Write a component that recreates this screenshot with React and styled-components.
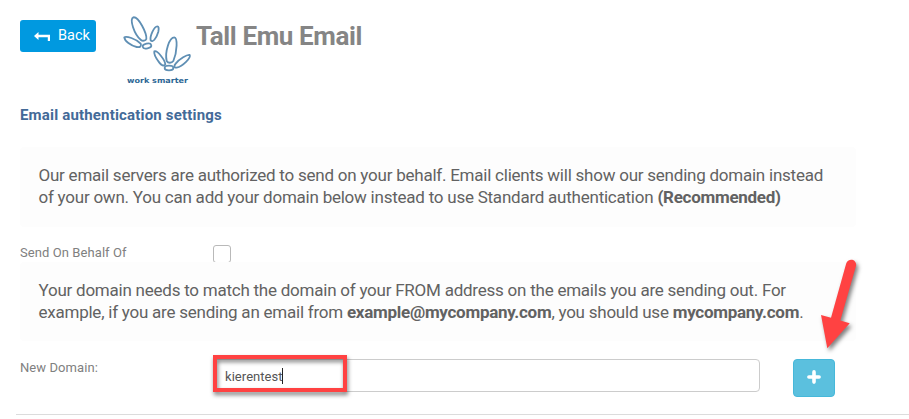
import React from 'react'
import styled, { createGlobalStyle } from 'styled-components'

const GlobalStyle = createGlobalStyle`
  * {
    box-sizing: border-box;
  }
  body {
    margin: 0;
    background: #fff;
    font-family: Roboto, 'Liberation Sans', sans-serif;
    overflow: hidden;
  }
`

const Page = styled.main`
  position: relative;
  height: 419px;
  padding-left: 20px;
  overflow: hidden;
`

const Header = styled.header`
  display: flex;
  align-items: flex-start;
  height: 98px;
`

const BackButton = styled.button`
  display: flex;
  align-items: center;
  gap: 8px;
  width: 76px;
  height: 32px;
  margin-top: 20px;
  padding: 0 0 1px 14px;
  border: 0;
  border-radius: 3px;
  background: #0099e0;
  color: #fff;
  font: 400 14.5px Roboto, sans-serif;
`

const Logo = styled.svg`
  width: 90px;
  height: 90px;
  margin: 5px -4px 0 14px;
  flex: none;
  fill: none;
  stroke: #5f8fb4;
  stroke-width: 5.5;
`

const LogoText = styled.text`
  fill: #2d6795;
  stroke: none;
  font: 700 22px 'DejaVu Sans', sans-serif;
`

const Title = styled.h1`
  margin: 20px 0 0;
  color: #858585;
  font-size: 26px;
  font-weight: 700;
  letter-spacing: -0.38px;
  line-height: 32px;
`

const SectionTitle = styled.h2`
  height: 49px;
  margin: 0;
  padding-top: 8px;
  color: #436a98;
  font-size: 15px;
  font-weight: 700;
  letter-spacing: 0.18px;
  line-height: 18px;
`

const Panel = styled.p`
  width: 836px;
  height: ${({ height }) => height}px;
  margin: 0;
  padding: 17px 18.5px;
  border-radius: 4px;
  background: #fdfdfd;
  color: #626262;
  font-size: 17px;
  letter-spacing: -0.235px;
  line-height: 22px;
  white-space: nowrap;

  b {
    letter-spacing: -0.27px;
  }
`

const Row = styled.div`
  display: flex;
  align-items: flex-start;
  height: ${({ height }) => height}px;
  padding-top: ${({ top }) => top}px;
  overflow: ${({ clipped }) => (clipped ? 'hidden' : 'visible')};
`

const Label = styled.label`
  flex: none;
  width: 193px;
  color: #808080;
  font-size: 13px;
  letter-spacing: 0.08px;
  line-height: ${({ lineHeight = 16 }) => lineHeight}px;
`

const Checkbox = styled.span`
  width: 18px;
  height: 18px;
  border: 1px solid #b9b9b9;
  border-radius: 3px;
  background: #fff;
`

const Field = styled.div`
  position: relative;
  display: flex;
  align-items: center;
  width: 547px;
  height: 33px;
  padding: 2px 0 0 11px;
  border: 1px solid #ccc;
  border-radius: 4px;
  color: #555;
  font-size: 13px;
  letter-spacing: 0.05px;
`

const Caret = styled.span`
  width: 1px;
  height: 16px;
  margin: -1px 0 0 -0.5px;
  background: #222;
`

const Highlight = styled.span`
  position: absolute;
  top: -5px;
  left: -1px;
  width: 134px;
  height: 37px;
  border: 4px solid #ff4242;
  filter: drop-shadow(1px 3px 2px rgba(0, 0, 0, 0.5));
`

const AddButton = styled.button`
  display: flex;
  align-items: center;
  justify-content: center;
  width: 42px;
  height: 38px;
  margin-left: 33px;
  padding: 0 1px 2px 0;
  border: 1px solid #46b8da;
  border-radius: 4px;
  background: #5bc0de;
`

const Divider = styled.hr`
  height: 1px;
  margin: 0 0 0 -4px;
  border: 0;
  background: #dcdcdc;
`

const Pointer = styled.svg`
  position: absolute;
  top: 252px;
  left: 810px;
  filter: drop-shadow(2px 3px 2px rgba(0, 0, 0, 0.5));
`

function WorkSmarterLogo() {
  return (
    <Logo viewBox="0 0 270 270">
      <path d="M70 37C58 42 72 88 93 105C98 109 107 107 109 102C111 86 86 34 70 37Z" />
      <path d="M142 64C132 64 119 95 122 106C128 113 138 103 145 80C147 70 146 64 142 64Z" />
      <path d="M43 97C48 92 78 101 92 116C96 123 90 128 80 126C62 122 44 108 43 97Z" />
      <ellipse cx="111" cy="123" rx="13" ry="7" transform="rotate(-12 111 123)" />
      <path d="M193 97C203 98 202 140 190 168C185 175 174 175 170 168C164 140 178 97 193 97Z" />
      <path d="M133 139C142 135 165 165 166 178C162 185 154 181 148 173C138 160 131 146 133 139Z" />
      <path d="M239 150C244 158 218 184 200 188C191 189 192 182 197 176C208 162 232 148 239 150Z" />
      <ellipse cx="177" cy="189" rx="13" ry="7" />
      <LogoText x="51" y="233" textLength="183" lengthAdjust="spacingAndGlyphs">
        work smarter
      </LogoText>
    </Logo>
  )
}

export default function App() {
  return (
    <Page>
      <GlobalStyle />
      <Header>
        <BackButton>
          <svg width="16" height="12" viewBox="0 0 16 12" fill="#fff">
            <path d="M0 6L4.5 2v2.7H16V11h-2.2V7.3H4.5V10Z" />
          </svg>
          Back
        </BackButton>
        <WorkSmarterLogo />
        <Title>Tall Emu Email</Title>
      </Header>
      <SectionTitle>Email authentication settings</SectionTitle>
      <Panel height={80}>
        Our email servers are authorized to send on your behalf. Email clients will show our sending domain instead
        <br />
        of your own. You can add your domain below instead to use Standard authentication <b>(Recommended)</b>
      </Panel>
      <Row height={35} top={18} clipped>
        <Label>Send On Behalf Of</Label>
        <Checkbox />
      </Row>
      <Panel height={79}>
        Your domain needs to match the domain of your FROM address on the emails you are sending out. For
        <br />
        example, if you are sending an email from <b>example@mycompany.com</b>, you should use <b>mycompany.com</b>.
      </Panel>
      <Row height={73} top={18}>
        <Label lineHeight={18}>New Domain:</Label>
        <Field>
          kierentest
          <Caret />
          <Highlight />
        </Field>
        <AddButton aria-label="Add domain">
          <svg width="14" height="14" viewBox="0 0 14 14" stroke="#fff" strokeWidth="3.6" strokeLinecap="round">
            <path d="M7 1.9v10.2M1.9 7h10.2" />
          </svg>
        </AddButton>
      </Row>
      <Divider />
      <Pointer width="60" height="110" viewBox="810 252 60 110" fill="#ff4242">
        <path d="M846.2 263.5A5 5 0 0 1 856 266L840.3 320.5L849.7 323.2L827.3 348.3L821 315L831 317.8Z" />
      </Pointer>
    </Page>
  )
}
